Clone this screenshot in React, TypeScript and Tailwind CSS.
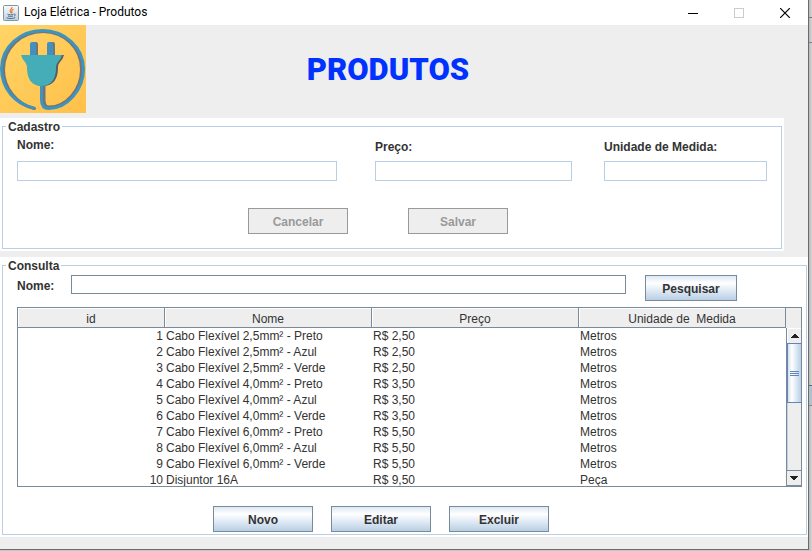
import type { ReactNode } from "react";

type Produto = { id: number; nome: string; preco: string; unidade: string };

const produtos: Produto[] = [
  { id: 1, nome: "Cabo Flexível 2,5mm² - Preto", preco: "R$ 2,50", unidade: "Metros" },
  { id: 2, nome: "Cabo Flexível 2,5mm² - Azul", preco: "R$ 2,50", unidade: "Metros" },
  { id: 3, nome: "Cabo Flexível 2,5mm² - Verde", preco: "R$ 2,50", unidade: "Metros" },
  { id: 4, nome: "Cabo Flexível 4,0mm² - Preto", preco: "R$ 3,50", unidade: "Metros" },
  { id: 5, nome: "Cabo Flexível 4,0mm² - Azul", preco: "R$ 3,50", unidade: "Metros" },
  { id: 6, nome: "Cabo Flexível 4,0mm² - Verde", preco: "R$ 3,50", unidade: "Metros" },
  { id: 7, nome: "Cabo Flexível 6,0mm² - Preto", preco: "R$ 5,50", unidade: "Metros" },
  { id: 8, nome: "Cabo Flexível 6,0mm² - Azul", preco: "R$ 5,50", unidade: "Metros" },
  { id: 9, nome: "Cabo Flexível 6,0mm² - Verde", preco: "R$ 5,50", unidade: "Metros" },
  { id: 10, nome: "Disjuntor 16A", preco: "R$ 9,50", unidade: "Peça" },
];

function JavaIcon() {
  return (
    <svg width="16" height="16" viewBox="0 0 16 16" aria-hidden="true">
      <defs>
        <linearGradient id="java-bg" x1="0" y1="0" x2="0" y2="1">
          <stop offset="0" stopColor="#f8fafb" />
          <stop offset="1" stopColor="#c3d0da" />
        </linearGradient>
      </defs>
      <rect x="0.5" y="0.5" width="15" height="15" rx="1" fill="url(#java-bg)" stroke="#8395a3" />
      <path d="M8.800 2c1 1.600-2.400 2.600-1.600 4.200.3.800 1 1.200.8 2.200M10.500 4.200c-1.500.7-2.200 1.400-1.600 2.400.4.700.2 1.200-.2 1.600" fill="none" stroke="#e8762d" strokeWidth="1.100" />
      <path d="M4.500 9.300c1.500.7 4.500.7 6 0M5 11c1.500.6 3.800.6 5 0M3.500 12.800c2.500 1 7 .9 8.800-.2M11 9.200c1.700-.4 1.800 1.300 0 1.900" fill="none" stroke="#3f6e99" strokeWidth="1" />
    </svg>
  );
}

function PlugLogo() {
  return (
    <svg width="86" height="88" viewBox="0 0 86 88" role="img" aria-label="Loja Elétrica">
      <defs>
        <linearGradient id="logo-bg" x1="0" y1="0" x2="1" y2="1">
          <stop offset="0" stopColor="#ffd466" />
          <stop offset="1" stopColor="#ffc04a" />
        </linearGradient>
      </defs>
      <rect width="86" height="88" fill="url(#logo-bg)" />
      <g fill="none" strokeLinecap="round">
        <path d="M34.500 83.500C17 79.500 3.500 63 3.500 44.500C3.500 23 21.500 6.500 43 6.500S81.500 23 81.500 44.500C81.500 65 66 82 49 82C45 82 44 79 44 75V60" stroke="#737477" strokeWidth="3" />
        <path d="M33.500 83C15 79 1.500 63.500 1.500 43.500C1.500 22 20.500 5.500 42.500 5.500S83.500 22 83.500 44C83.500 65 67 83.500 49 83.500C43 83.500 41.500 80 41.500 75V60" stroke="#3d94bf" strokeWidth="3" />
      </g>
      <path d="M32 30V19q0-2 2-2h2q2 0 2 2v11zM49 30V19q0-2 2-2h2q2 0 2 2v11z" fill="#737477" />
      <path d="M30 30V19q0-2 2-2h2q2 0 2 2v11zM47 30V19q0-2 2-2h2q2 0 2 2v11z" fill="#438fbd" />
      <path d="M23 30H64q-1 4-4 7q-2 2-2 6c0 11-5 18-15 18S28 54 28 43z" fill="#555d65" />
      <path d="M21 30H62q-1 4-4 7q-2 2-2 6c0 11-5 18-14.500 18S27 54 27 43q0-4-2-6q-3-3-4-7z" fill="#44adb8" />
    </svg>
  );
}

function MetalButton({ children, wide = true, disabled = false }: { children: ReactNode; wide?: boolean; disabled?: boolean }) {
  return (
    <button
      type="button"
      disabled={disabled}
      className={`h-[26px] shrink-0 border pt-[2px] text-center font-bold ${wide ? "w-[100px]" : "w-[92px]"} ${
        disabled
          ? "border-[#999999] bg-[#eeeeee] text-[#999999]"
          : "border-[#7a8a99] bg-linear-to-b from-[#dde8f3] via-white via-30% to-[#b8cfe5] text-[#333333]"
      }`}
    >
      {children}
    </button>
  );
}

function TitleBar() {
  return (
    <header className="flex h-[25px] items-center bg-white pl-[3px] font-[Roboto,sans-serif] text-black">
      <JavaIcon />
      <span className="ml-[5px] pb-px text-[12px] leading-4">Loja Elétrica - Produtos</span>
      <div className="ml-auto flex">
        <button type="button" aria-label="Minimizar" className="flex h-6 w-[46px] items-center justify-center">
          <svg width="10" height="10" shapeRendering="crispEdges"><path d="M0 5h10v1H0z" fill="#000" /></svg>
        </button>
        <button type="button" aria-label="Maximizar" disabled className="flex h-6 w-[46px] items-center justify-center">
          <svg width="10" height="10"><rect x="0.5" y="0.5" width="9" height="9" fill="none" stroke="#cccccc" /></svg>
        </button>
        <button type="button" aria-label="Fechar" className="flex h-6 w-[46px] items-center justify-center">
          <svg width="10" height="10"><path d="M0 0l10 10M10 0L0 10" stroke="#000" strokeWidth="1.200" /></svg>
        </button>
      </div>
    </header>
  );
}

const fieldClass = "block h-5 w-full min-w-0 border border-[#b8cfe5] bg-white px-1 outline-none";
const legendClass = "ml-[3px] h-[17px] px-[2px] font-bold leading-[19px]";

function Cadastro() {
  return (
    <section className="mr-6 bg-white px-[2px] pb-[2px]">
      <fieldset className="border border-[#b8cfe5] pb-[14px]">
        <legend className={legendClass}>Cadastro</legend>
        <div className="flex items-end pt-[2px] pr-[14px] pl-[14px]">
          <div className="flex-[320]">
            <label htmlFor="nome" className="mb-2 block font-bold">Nome:</label>
            <input id="nome" type="text" className={fieldClass} />
          </div>
          <div className="ml-[38px] flex-[197]">
            <label htmlFor="preco" className="mb-[6px] block font-bold">Preço:</label>
            <input id="preco" type="text" className={fieldClass} />
          </div>
          <div className="ml-8 flex-[163]">
            <label htmlFor="unidade" className="mb-[6px] block font-bold">Unidade de Medida:</label>
            <input id="unidade" type="text" className={fieldClass} />
          </div>
        </div>
        <div className="mt-[27px] flex gap-[60px] pl-[245px]">
          <MetalButton disabled>Cancelar</MetalButton>
          <MetalButton disabled>Salvar</MetalButton>
        </div>
      </fieldset>
    </section>
  );
}

function ScrollBar() {
  return (
    <div className="flex w-[15px] shrink-0 flex-col">
      <div className="h-5 bg-[#eeeeee]" />
      <div className="flex flex-1 flex-col border-l border-[#7a8a99] bg-[#eeeeee]">
        <button type="button" aria-label="Rolar para cima" className="flex h-[15px] items-center justify-center border-t border-l border-white">
          <svg width="8" height="4" shapeRendering="crispEdges"><path d="M3 0h2v1h1v1h1v1h1v1H0V3h1V2h1V1h1z" fill="#222" /></svg>
        </button>
        <div className="flex h-[60px] flex-col items-center justify-center gap-px border-y border-l border-[#6382bf] bg-linear-to-r from-[#d2e1ef] via-white via-30% to-[#b8cfe5]">
          <div className="h-px w-[9px] bg-[#6382bf]" />
          <div className="h-px w-[9px] bg-[#6382bf]" />
          <div className="h-px w-[9px] bg-[#6382bf]" />
        </div>
        <div className="flex-1 border-l border-[#b8cfe5]" />
        <button type="button" aria-label="Rolar para baixo" className="flex h-4 items-center justify-center border-t border-b border-[#7a8a99]">
          <svg width="8" height="4" shapeRendering="crispEdges"><path d="M0 0h8v1H7v1H6v1H5v1H3V3H2V2H1V1H0z" fill="#222" /></svg>
        </button>
      </div>
    </div>
  );
}

const headClass = "h-5 border-r border-b border-[#7a8a99] bg-[#eeeeee] p-0 pt-[2px] text-center font-normal shadow-[inset_1px_1px_0_#ffffff]";

function TabelaProdutos() {
  return (
    <div className="mt-[6px] flex h-[180px] overflow-hidden border border-[#7a8a99]">
      <div className="min-w-0 flex-1 overflow-hidden">
        <table className="w-full table-fixed border-separate border-spacing-0">
          <colgroup>
            <col className="w-[147px]" />
            <col />
            <col />
            <col />
          </colgroup>
          <thead>
            <tr>
              <th scope="col" className={headClass}>id</th>
              <th scope="col" className={headClass}>Nome</th>
              <th scope="col" className={headClass}>Preço</th>
              <th scope="col" className={headClass}>Unidade de&nbsp; Medida</th>
            </tr>
          </thead>
          <tbody>
            {produtos.map((p) => (
              <tr key={p.id}>
                <td className="h-4 p-0 pr-[2px] text-right">{p.id}</td>
                <td className="h-4 p-0 pl-px">{p.nome}</td>
                <td className="h-4 p-0 pl-px">{p.preco}</td>
                <td className="h-4 p-0 pl-px">{p.unidade}</td>
              </tr>
            ))}
          </tbody>
        </table>
      </div>
      <ScrollBar />
    </div>
  );
}

function Consulta() {
  return (
    <section className="mt-[6px] bg-white pr-px pb-[2px] pl-[2px]">
      <fieldset className="min-w-0 border border-[#b8cfe5] pb-[2px]">
        <legend className={legendClass}>Consulta</legend>
        <div className="pt-px pr-1 pl-[14px]">
          <div className="flex items-start">
            <label htmlFor="busca" className="w-[54px] shrink-0 pt-[3px] font-bold">Nome:</label>
            <input id="busca" type="text" className="h-[19px] min-w-0 flex-1 border border-[#7a8a99] bg-white px-1 outline-none" />
            <div className="mr-[65px] ml-[19px] flex">
              <MetalButton wide={false}>Pesquisar</MetalButton>
            </div>
          </div>
          <TabelaProdutos />
          <div className="mt-[19px] flex gap-[18px] pl-[196px]">
            <MetalButton>Novo</MetalButton>
            <MetalButton>Editar</MetalButton>
            <MetalButton>Excluir</MetalButton>
          </div>
        </div>
      </fieldset>
    </section>
  );
}

export default function App() {
  return (
    <div className="bg-[#c6c6c6] pb-px font-['Liberation_Sans',Arial,sans-serif] text-[12px] leading-4 text-[#333333]">
      <div className="flex">
        <main className="min-w-0 flex-1 border-r border-b border-[#6b6b6b] bg-[#eeeeee] pb-3">
          <TitleBar />
          <div className="flex h-[93px] items-start">
            <PlugLogo />
            <h1 className="flex-1 pt-[25px] pr-[118px] text-center font-[Roboto,sans-serif] text-[31px] leading-10 font-black text-[#0032ff]">
              PRODUTOS
            </h1>
          </div>
          <Cadastro />
          <Consulta />
        </main>
        <div className="flex w-[3px] shrink-0 flex-col bg-linear-to-r from-[#b8b8b8] to-[#d6d6d6]">
          <div className="h-[18px] border-b border-[#777777]" />
          <div className="h-[25px] border-b border-[#6f8299]" />
          <div className="mt-[342px] h-[21px] border-y border-t-[#4d7090] border-b-[#888888] bg-[#b5c0cb]" />
        </div>
      </div>
    </div>
  );
}
